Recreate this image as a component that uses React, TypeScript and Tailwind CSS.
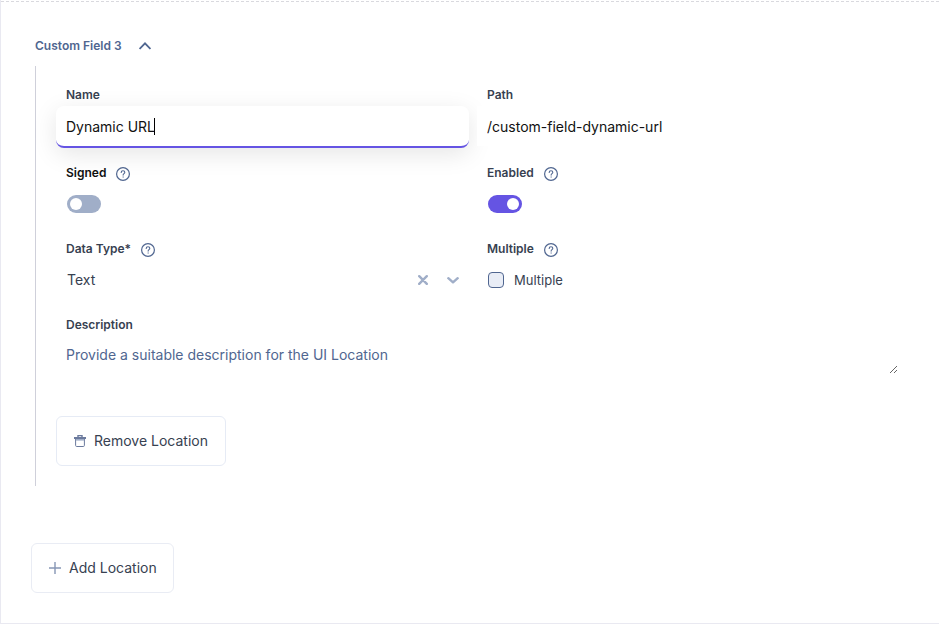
import type { ReactNode } from "react";

function HelpIcon() {
  return (
    <svg viewBox="0 0 14 14" className="size-3.5 shrink-0" fill="none" stroke="#506690" aria-hidden="true">
      <circle cx="7" cy="7" r="6.4" strokeWidth="1.2" />
      <path d="M5.2 5.4C5.2 4.3 6 3.7 7 3.7s1.8.6 1.8 1.6c0 1.3-1.7 1.4-1.7 2.8" strokeWidth="1.1" strokeLinecap="round" />
      <circle cx="7.1" cy="10" r=".35" fill="#506690" strokeWidth=".5" />
    </svg>
  );
}

type FieldProps = {
  id: string;
  label: string;
  help?: boolean;
  dark?: boolean;
  children: ReactNode;
};

function Field({ id, label, help, dark, children }: FieldProps) {
  return (
    <div className="min-w-0">
      <div className="mb-px flex h-5 items-center gap-2.5 pl-2.5">
        <label htmlFor={id} className={`text-xs leading-5 font-semibold ${dark ? "text-[#111111]" : "text-[#374151]"}`}>
          {label}
        </label>
        {help && (
          <button type="button" aria-label={`About ${label}`} className="pt-0.5">
            <HelpIcon />
          </button>
        )}
      </div>
      {children}
    </div>
  );
}

function Toggle({ id, defaultChecked = false }: { id: string; defaultChecked?: boolean }) {
  return (
    <div className="flex h-10 items-center pl-[11px]">
      <input
        id={id}
        type="checkbox"
        role="switch"
        defaultChecked={defaultChecked}
        className="h-[18px] w-[34px] appearance-none rounded-full bg-[#a0aec8] p-[3px] before:block before:size-3 before:rounded-full before:bg-white checked:bg-[#6554e3] checked:before:ml-4"
      />
    </div>
  );
}

export default function App() {
  return (
    <main className="border-b border-l border-[#e9e9f1] bg-white pt-px font-['Inter',sans-serif] text-sm text-[#374151]">
      <div className="border-t border-dashed border-[#d9d9de] pt-[34px] pr-[41px] pb-[30px] pl-[30px]">
        <section className="pl-1">
          <h2>
            <button type="button" aria-expanded="true" className="flex h-5 items-center gap-[17px] text-xs font-semibold text-[#506690]">
              Custom Field 3
              <svg viewBox="0 0 12 8" className="h-2 w-3" fill="none" stroke="currentColor" strokeWidth="1.8" aria-hidden="true">
                <path d="M.6 7 6 1.4 11.4 7" />
              </svg>
            </button>
          </h2>

          <div className="mt-2.5 border-l border-[#cfd0da] pt-[19px] pb-5 pl-5">
            <div className="grid grid-cols-2 gap-x-2 gap-y-[15px] pr-2">
              <Field id="name" label="Name">
                <div className="relative">
                  <input
                    id="name"
                    type="text"
                    defaultValue="Dynamic URL"
                    className="block h-[42px] w-full rounded-lg border-b-2 border-[#6554e3] bg-white px-2.5 text-[#111111] shadow-[0_6px_25px_rgba(0,0,0,0.1)] outline-none"
                  />
                  <span className="absolute top-3 left-[98px] h-[17px] w-px bg-black" aria-hidden="true" />
                </div>
              </Field>
              <Field id="path" label="Path">
                <input
                  id="path"
                  type="text"
                  readOnly
                  defaultValue="/custom-field-dynamic-url"
                  className="relative block h-10 w-full bg-white px-2.5 text-[#111111] outline-none"
                />
              </Field>

              <Field id="signed" label="Signed" help dark>
                <Toggle id="signed" />
              </Field>
              <Field id="enabled" label="Enabled" help>
                <Toggle id="enabled" defaultChecked />
              </Field>

              <Field id="data-type" label="Data Type*" help>
                <div className="flex h-10 items-center gap-[19px] pr-2.5 pl-[11px]">
                  <select id="data-type" className="min-w-0 flex-1 appearance-none bg-transparent outline-none">
                    <option>Text</option>
                  </select>
                  <button type="button" aria-label="Clear data type">
                    <svg viewBox="0 0 10 10" className="size-2.5" fill="none" stroke="#a0aec8" strokeWidth="2.4" strokeLinecap="round">
                      <path d="M1.2 1.2l7.6 7.6M8.8 1.2 1.2 8.8" />
                    </svg>
                  </button>
                  <svg viewBox="0 0 12 8" className="h-2 w-3" fill="none" stroke="#a0aec8" strokeWidth="2.4" strokeLinecap="round" strokeLinejoin="round" aria-hidden="true">
                    <path d="M1.3 2.2 6 6.3l4.7-4.1" />
                  </svg>
                </div>
              </Field>
              <Field id="multiple" label="Multiple" help>
                <label className="flex h-10 items-center gap-2.5 pl-[11px] text-[13px]">
                  <input
                    id="multiple"
                    type="checkbox"
                    className="size-4 appearance-none rounded border border-[#506690] bg-[#e9edf6] checked:bg-[#6554e3]"
                  />
                  Multiple
                </label>
              </Field>
            </div>

            <div className="mt-[15px]">
              <Field id="description" label="Description">
                <textarea
                  id="description"
                  rows={1}
                  placeholder="Provide a suitable description for the UI Location"
                  className="block h-[38px] w-full resize px-2.5 pt-[9px] leading-5 outline-none placeholder:text-[#506690]"
                />
              </Field>
            </div>

            <button type="button" className="mt-[42px] flex h-[50px] items-center gap-2 rounded-md border border-[#e6ebf5] px-[17px]">
              <svg viewBox="0 0 12 12" className="size-3" fill="none" stroke="#6b7a9d" aria-hidden="true">
                <path d="M4 2V.6h4V2" strokeWidth="1.4" />
                <path d="M0 3h12" strokeWidth="2" />
                <path d="M1.6 4v6.4q0 1.1 1.1 1.1h6.6q1.1 0 1.1-1.1V4" />
                <path d="M2 4.8h8" stroke="#a0aec8" strokeWidth="1.6" />
              </svg>
              Remove Location
            </button>
          </div>
        </section>

        <button type="button" className="mt-[57px] flex h-[50px] items-center gap-2 rounded-md border border-[#e9ecf4] pr-4 pl-[17px]">
          <svg viewBox="0 0 12 12" className="size-3" stroke="#8796b5" strokeWidth="1.4" aria-hidden="true">
            <path d="M6 0v12M0 6h12" />
          </svg>
          Add Location
        </button>
      </div>
    </main>
  );
}
